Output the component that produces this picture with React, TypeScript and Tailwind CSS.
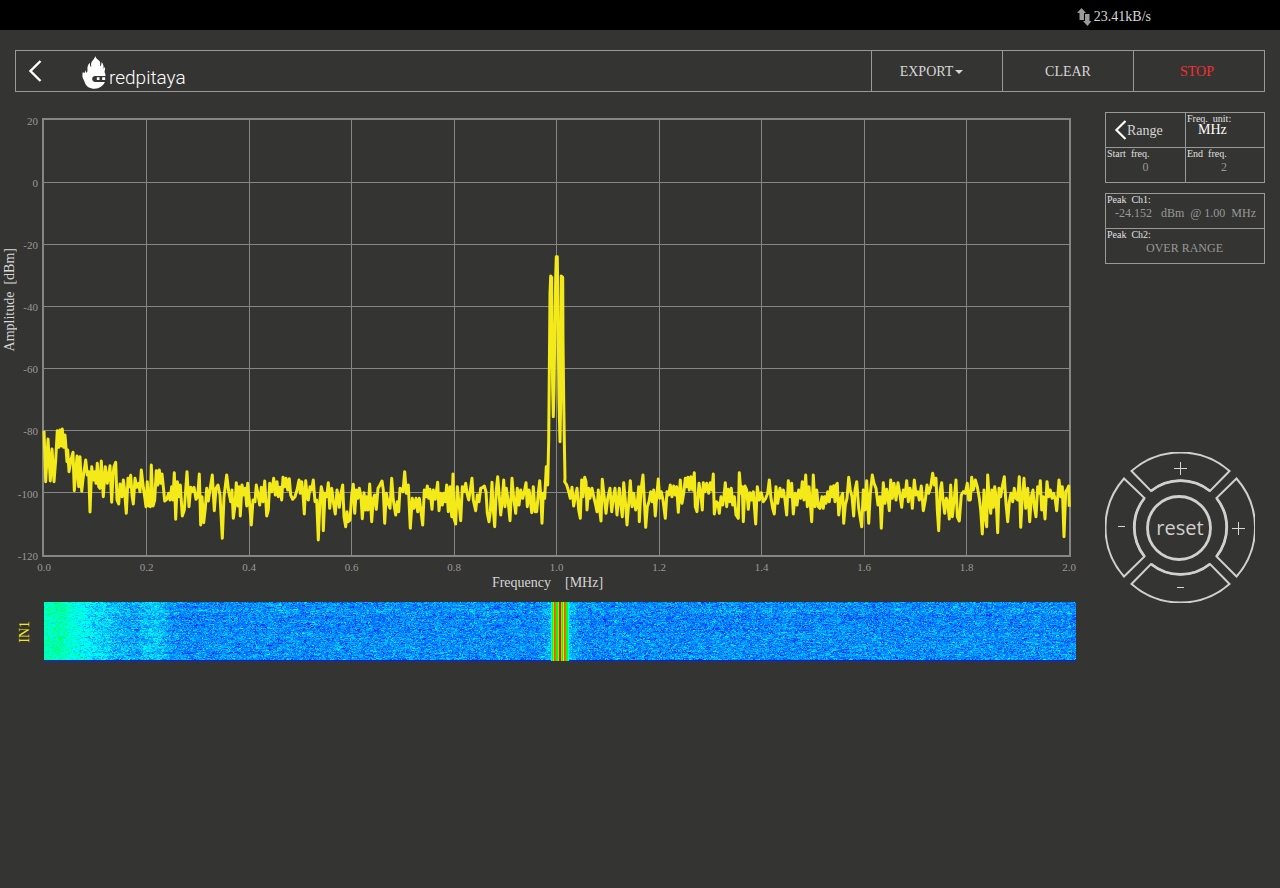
import { useEffect, useRef } from "react";
import type { ReactNode } from "react";

const PLOT_W = 1029;
const PLOT_H = 439;

type Segment = { x: number; y: number; points: string };

/* Sweep samples, in thirds of a plot unit, relative to each segment's origin. */
const SEGMENTS: Segment[] = [
  {
    x: -42,
    y: 282,
    points:
      "132,92 137,245 144,117 151,243 156,147 162,245 167,180 172,92 176,142 180,90 184,138 187,87 191,142 195,105 201,185 203,150 207,215 213,180 219,157 223,272 231,168 236,260 240,170 245,274 250,230 257,180 262,225 266,215 270,336 275,200 280,240 284,215 288,250 292,190 296,260 300,265 304,183 310,290 316,200 322,250 330,197 335,307 339,225 342,200 347,187 351,300 356,312 360,252 366,290 370,240 373,262 379,340 384,235 388,260 392,226 396,285 400,312 405,235 410,262 416,250 420,275 424,210 430,262 434,290 438,320 442,245 446,318 451,320 454,195 459,318 464,300 469,212 473,255 478,210 482,250 486,222 490,260 494,303 500,298 506,280 510,300 515,260 519,300 523,218 527,358 532,245 537,290 541,255 547,348 553,330 561,215 567,320 572,262 577,275 582,262 588,298 593,290 598,222 602,375 606,290 611,368 616,325 620,265 625,303 629,275 637,225 643,332 648,265 654,255 660,285 667,415 672,290 680,225 686,275 692,305 696,270 700,355 705,318 709,248 714,318 718,260 721,348 726,255 731,285 736,265 740,318 743,250 748,300 754,375 759,300 765,305 769,255 774,283 779,315 784,262 789,305 794,243 800,348 805,330 809,250 815,275 821,235 826,285 831,245 835,290 840,262 845,300 849,232 854,260 858,235 863,270 868,236 872,285 878,298 885,290 891,270 897,240",
  },
  {
    x: 248,
    y: 332,
    points:
      "27,92 31,130 35,95 39,130 43,192 47,92 52,145 55,150 60,110 65,120 70,90 75,155 80,150 85,270 90,150 94,110 98,130 100,242 105,130 110,140 115,98 119,175 125,115 130,155 136,192 141,120 145,140 148,172 153,130 158,105 162,200 167,230 171,185 175,215 180,210 185,135 190,103 194,190 199,120 204,145 208,115 213,140 217,206 222,128 226,180 230,140 234,180 239,102 245,215 250,145 254,135 259,178 264,115 270,105 276,93 280,120 284,220 289,130 295,160 300,175 305,85 310,150 317,195 322,155 326,185 330,115 335,118 339,125 344,65 349,130 355,105 361,235 367,145 372,175 378,145 383,185 388,145 393,185 398,225 403,120 408,140 412,108 416,145 420,118 426,178 430,120 436,148 443,97 447,182 452,130 457,165 461,130 466,155 470,105 475,185 480,110 485,200 489,72 492,205 497,222 502,110 507,160 512,212 517,110 522,125 527,100 531,130 536,150 541,120 546,85 550,150 557,182 562,135 567,155 572,115 578,112 583,108 588,125 592,190 597,215 601,185 606,97 610,180 614,230 619,120 623,80 628,140 632,195 637,150 641,90 645,170 649,115 654,150 660,212 666,85 671,145 677,190 682,115 687,165 692,120 698,145 703,125 708,98 712,170 717,120 721,150 725,188 730,110 735,185 740,185 745,130 749,92 753,150 756,220 760,130 764,145 769,50",
  },
  {
    x: 458,
    y: 122,
    points:
      "143,735 146,600 148,400 150,160 152,108 155,112 156,300 158,450 160,530 162,450 164,300 167,110 169,50 172,50 175,300 177,480 180,605 182,480 183,300 184,108 188,112 189,300 191,480 193,600 195,715",
  },
  {
    x: 518,
    y: 332,
    points:
      "14,95 20,105 26,125 31,145 36,112 41,168 46,140 51,115 56,180 61,205 65,90 69,140 74,82 78,95 81,180 86,115 90,145 96,115 101,140 106,160 111,185 115,120 119,180 123,213 127,88 132,135 138,190 143,145 150,115 155,185 160,145 165,115 171,195 178,115 182,160 187,200 191,98 196,150 201,225 206,160 211,92 216,170 221,130 227,180 232,160 236,110 238,215 243,120 249,75 253,150 257,232 262,170 267,155 272,125 277,155 281,120 286,198 290,140 295,87 299,145 304,125 309,150 316,205 321,125 326,135 331,105 336,140 341,108 346,135 350,110 355,187 361,90 366,160 371,130 376,85 380,110 384,82 388,120 393,80 398,120 403,68 406,170 411,185 417,100 422,130 427,180 430,98 435,125 440,100 446,130 451,98 456,120 460,72 463,192 469,155 474,160 478,190 483,140 488,165 492,140 496,98 500,170 505,118 509,155 514,115 518,165 523,140 528,195 535,205 538,68 543,130 547,110 550,215 555,108 560,120 565,178 570,128 575,150 580,125 587,222 592,110 598,150 604,128 610,155 617,145 623,130 628,90 633,145 638,175 643,192 648,110 653,160 660,115 665,140 670,120 675,150 680,195 685,92 690,140 695,100 700,192 706,130 711,165 716,120 722,145 727,95 732,150 737,75 742,170 747,110 750,150 755,215 760,75 765,170 770,120 775,170",
  },
  {
    x: 768,
    y: 332,
    points:
      "30,175 36,140 40,175 44,140 48,160 53,125 58,155 62,110 67,140 71,107 75,155 79,105 82,100 86,195 92,145 98,130 101,220 106,165 111,145 116,82 121,120 126,140 131,198 135,120 140,95 146,175 155,230 160,120 165,180 170,92 176,220 181,130 187,75 192,100 198,115 204,165 210,140 214,235 220,98 225,160 230,118 234,140 238,182 242,90 247,145 252,100 258,150 264,98 269,130 275,172 280,120 285,140 290,92 295,155 300,115 304,130 307,175 313,90 318,135 323,125 328,150 334,108 340,182 346,150 351,105 356,130 362,110 368,70 373,105 378,85 382,180 386,242 391,120 395,98 399,150 404,190 409,145 413,155 418,207 422,105 427,200 433,145 438,90 442,200 448,213 454,135 460,125 466,130 472,100 476,150 481,150 485,82 490,120 496,90 502,110 508,145 512,180 517,252 522,120 526,200 530,230 533,75 538,150 542,190 546,120 550,172 554,110 558,140 563,248 567,115 572,140 577,110 583,80 588,160 593,215 598,155 603,130 608,155 613,115 618,145 623,150 628,80 632,232 637,140 642,85 647,175 653,115 659,215 664,140 669,120 673,170 678,200 683,110 688,130 691,92 695,180 700,140 705,207 711,95 716,140 721,120 726,145 731,130 736,150 740,182 747,90 752,140 757,110 762,260 767,125 772,118 776,108 778,170",
  },
];

const TRACE = SEGMENTS.flatMap((s) =>
  s.points.split(" ").map((p) => {
    const [px, py] = p.split(",").map(Number);
    return `${(s.x + px / 3).toFixed(1)},${(s.y + py / 3).toFixed(1)}`;
  }),
).join(" ");

const X_TICKS = ["0.0", "0.2", "0.4", "0.6", "0.8", "1.0", "1.2", "1.4", "1.6", "1.8", "2.0"];
const Y_TICKS = ["20", "0", "-20", "-40", "-60", "-80", "-100", "-120"];

function Plot() {
  return (
    <svg
      viewBox={`0 0 ${PLOT_W} ${PLOT_H}`}
      preserveAspectRatio="none"
      className="block h-[439px] w-full"
      role="img"
      aria-label="Spectrum"
    >
      <g stroke="#868685" strokeWidth="1" shapeRendering="crispEdges">
        {[1, 2, 3, 4, 5, 6, 7, 8, 9].map((i) => (
          <line key={i} x1={Math.floor(2 + 102.5 * i) + 0.5} x2={Math.floor(2 + 102.5 * i) + 0.5} y1="2" y2="437" />
        ))}
        {[0, 1, 2, 3, 4, 5].map((i) => (
          <line key={i} x1="2" x2="1027" y1={64.5 + 62 * i} y2={64.5 + 62 * i} />
        ))}
      </g>
      <rect x="1" y="1" width="1027" height="437" fill="none" stroke="#868685" strokeWidth="2" />
      <polyline points={TRACE} fill="none" stroke="#f4ea1a" strokeWidth="3" strokeLinejoin="round" />
    </svg>
  );
}

const COLS = 1032;
const ROWS = 59;

/* Blue - cyan - green - yellow - red ramp. */
function ramp(v: number): [number, number, number] {
  const t = Math.max(0, Math.min(1, v)) * 4;
  if (t < 1) return [0, t * 255, 255];
  if (t < 2) return [0, 255, (2 - t) * 255];
  if (t < 3) return [(t - 2) * 255, 255, 0];
  return [255, (4 - t) * 255, 0];
}

/* Carrier and its two sidebands, one level per column from column 507 on. */
const PEAK_START = 507;
const PEAK = [0.3, 0.46, 0.62, 0.92, 0.9, 0.5, 0.47, 0.62, 0.99, 1, 0.6, 0.5, 0.68, 0.92, 0.9, 0.47, 0.47, 0.3];

function baseLevel(x: number) {
  const edge = 0.2 / (1 + Math.exp((x - 46) / 20));
  const bump = 0.05 * Math.exp(-(((x - 110) / 14) ** 2));
  const green = 0.03 * Math.exp(-(((x - 16) / 9) ** 2));
  const skirt = 0.09 * Math.exp(-(((x - 516) / 12) ** 2));
  return 0.135 + edge + bump + green + skirt;
}

function Waterfall() {
  const ref = useRef<HTMLCanvasElement>(null);
  useEffect(() => {
    const ctx = ref.current?.getContext("2d");
    if (!ctx) return;
    const img = ctx.createImageData(COLS, ROWS);
    let seed = 20417;
    const rand = () => {
      seed = (seed * 1664525 + 1013904223) >>> 0;
      return seed / 4294967296;
    };
    for (let r = 0; r < ROWS; r++) {
      const rowShift = (rand() - 0.5) * 0.025;
      let noise = 0;
      for (let c = 0; c < COLS; c++) {
        if (rand() < 0.75) noise = (rand() + rand() + rand() - 1.5) * 0.085 + rowShift;
        const peak = PEAK[c - PEAK_START];
        const level = peak ?? (r === ROWS - 1 ? 0.03 : baseLevel(c) + noise);
        const [red, green, blue] = ramp(level);
        const k = (r * COLS + c) * 4;
        img.data[k] = red;
        img.data[k + 1] = green;
        img.data[k + 2] = blue;
        img.data[k + 3] = 255;
      }
    }
    ctx.putImageData(img, 0, 0);
  }, []);
  return (
    <canvas
      ref={ref}
      width={COLS}
      height={ROWS}
      className="block h-[59px] w-full [image-rendering:pixelated]"
      aria-label="IN1 waterfall"
    />
  );
}

function Chevron({ className }: { className: string }) {
  return (
    <svg viewBox="0 0 13 22" className={className} fill="none" stroke="#fff" strokeWidth="2.4" aria-hidden="true">
      <path d="M12 1 2 11l10 10" />
    </svg>
  );
}

function Logo() {
  return (
    <a href="#home" className="flex items-center gap-[3px] text-white">
      <svg viewBox="0 0 71 99" className="h-[33px] w-[24px]" aria-hidden="true">
        <path
          fill="#fff"
          d="M39 0c-1 9-10 13-12 22-1 5 1 8 0 11-3-2-4-6-4-13-6 6-8 13-7 21 0 5-1 8-3 9-2-3-3-5-3-9L7 52l-5-4c-2 8-2 14 1 20 3 5 4 8 5 12 4 11 15 18 29 18 15 0 26-8 31-20H39c-5 0-9-4-9-9s4-9 9-9h31c0-5-1-9-3-12 1-5 3-9 1-15l-4 5c1-7 0-14-6-20 0 6-1 11-4 13-1-5 2-10-2-16-4-4-11-7-13-15z"
        />
        <path fill="#fff" d="M44 64h8v8h-8zM60 64h9v8h-9z" />
      </svg>
      <span className="mt-[10px] font-['Roboto',sans-serif] text-[19px] leading-6 font-light">redpitaya</span>
    </a>
  );
}

function Field({ label, htmlFor, children }: { label: string; htmlFor?: string; children: ReactNode }) {
  return (
    <div className="flex min-w-0 flex-col">
      <label htmlFor={htmlFor} className="h-3 pl-px text-[10px] leading-3 whitespace-pre text-[#e0e0e0]">
        {label}
      </label>
      {children}
    </div>
  );
}

function RangePanel() {
  return (
    <div className="grid h-[71px] grid-cols-[80px_1fr] grid-rows-2 border border-[#999]">
      <button className="flex items-center border-r border-b border-[#999] pt-px pl-2 text-[14px] text-[#d6d6d6]">
        <Chevron className="h-5 w-[13px]" />
        <span className="pt-px">Range</span>
      </button>
      <div className="border-b border-[#999]">
        <Field label="Freq.  unit:" htmlFor="unit">
          <select
            id="unit"
            defaultValue="MHz"
            className="-mt-[3px] h-4 appearance-none bg-transparent pl-3 text-[14px] leading-4 text-white outline-none"
          >
            <option>Hz</option>
            <option>kHz</option>
            <option>MHz</option>
          </select>
        </Field>
      </div>
      <div className="border-r border-[#999]">
        <Field label="Start  freq." htmlFor="start">
          <input id="start" defaultValue="0" className="-mt-px h-4 w-full bg-transparent text-center text-[12px] leading-4 text-[#999] outline-none" />
        </Field>
      </div>
      <Field label="End  freq." htmlFor="end">
        <input id="end" defaultValue="2" className="-mt-px h-4 w-full bg-transparent pr-[2px] text-center text-[12px] leading-4 text-[#999] outline-none" />
      </Field>
    </div>
  );
}

function PeakPanel() {
  return (
    <div className="mt-[10px] grid h-[71px] grid-rows-2 border border-[#999]">
      <div className="border-b border-[#999]">
        <Field label="Peak  Ch1:" htmlFor="peak1">
          <output id="peak1" className="-mt-px h-4 pl-px text-center text-[12px] leading-4 whitespace-pre text-[#999]">
            {"-24.152   dBm  @ 1.00  MHz"}
          </output>
        </Field>
      </div>
      <Field label="Peak  Ch2:" htmlFor="peak2">
        <output id="peak2" className="-mt-px h-4 pr-px text-center text-[12px] leading-4 text-[#999]">
          OVER RANGE
        </output>
      </Field>
    </div>
  );
}

function Sign({ plus }: { plus?: boolean }) {
  return (
    <svg viewBox="0 0 15 15" className="h-[15px] w-[15px]" stroke="#d6d6d6" strokeWidth="1" shapeRendering="crispEdges" aria-hidden="true">
      {plus ? <path d="M1 7.5h13M7.5 1v13" /> : <path d="M4 7.5h7" />}
    </svg>
  );
}

function Knob() {
  return (
    <div className="relative mt-[188px] h-[151px] w-[150px]">
      <svg viewBox="0 0 150 151" className="absolute inset-0 h-full w-full" fill="none" stroke="#d0d0cf" strokeWidth="2" aria-hidden="true">
        <path d="M26.5 19A74 74 0 0 1 124.5 19L105 39A47 47 0 0 0 46 39Z" />
        <path d="M131.5 26.5A74 74 0 0 1 131.5 124.5L111.5 104.5A47 47 0 0 0 111.5 46Z" />
        <path d="M124.5 132A74 74 0 0 1 26.5 132L46 112A47 47 0 0 0 105 112Z" />
        <path d="M19 124.5A74 74 0 0 1 19 26.5L39.5 46A47 47 0 0 0 39.5 104.5Z" />
        <g strokeWidth="2.8">
          <path d="M46 39A47 47 0 0 1 105 39M111.5 46A47 47 0 0 1 111.5 104.5M105 112A47 47 0 0 1 46 112M39.5 104.5A47 47 0 0 1 39.5 46" />
          <circle cx="74" cy="76" r="31.5" />
        </g>
      </svg>
      <div className="relative grid h-full grid-cols-[33px_1fr_33px] grid-rows-[33px_1fr_31px]">
        <button aria-label="Zoom amplitude in" className="col-start-2 flex items-center justify-center">
          <Sign plus />
        </button>
        <button aria-label="Zoom frequency out" className="col-start-1 row-start-2 flex items-center justify-center pb-1">
          <Sign />
        </button>
        <button className="col-start-2 row-start-2 flex items-center justify-center pb-[2px] font-['Open_Sans'] text-[20px] leading-5 text-[#d0d0cf]">
          reset
        </button>
        <button aria-label="Zoom frequency in" className="col-start-3 row-start-2 flex items-center justify-center">
          <Sign plus />
        </button>
        <button aria-label="Zoom amplitude out" className="col-start-2 row-start-3 flex items-center justify-center">
          <Sign />
        </button>
      </div>
    </div>
  );
}

export default function App() {
  return (
    <div className="min-h-screen bg-[#343432] font-['Liberation_Serif',serif] text-[#d6d6d6]">
      <div className="flex h-[30px] items-center justify-end gap-[2px] bg-black pt-1 pr-[129px] text-[14px] leading-4">
        <svg viewBox="0 0 15 18" className="h-[18px] w-[15px]" fill="#999" aria-hidden="true">
          <path d="M4.500 0l4.500 5H7v7H2.500V5H0zM10.500 18l-4.500-5h2V6h4.500v7h2z" />
        </svg>
        <span>23.41kB/s</span>
      </div>

      <header className="mx-[15px] mt-5 flex h-[42px] items-stretch border border-[#999] text-[14px]">
        <button aria-label="Back" className="flex w-[66px] items-center pl-3">
          <Chevron className="h-[22px] w-[14px]" />
        </button>
        <div className="flex flex-1 items-center pt-[3px]">
          <Logo />
        </div>
        <button className="flex w-[131px] items-center justify-center gap-[2px] border-l border-[#999] pr-[11px]">
          EXPORT
          <svg viewBox="0 0 8 4" className="mt-px h-1 w-2" fill="#d6d6d6" aria-hidden="true">
            <path d="M0 0h8L4 4z" />
          </svg>
        </button>
        <button className="w-[131px] border-l border-[#999]">CLEAR</button>
        <button className="w-[131px] border-l border-[#999] pr-1 text-[#f22f33]">STOP</button>
      </header>

      <main className="mt-5 flex items-start pr-[15px]">
        <section className="grid min-w-0 flex-1 grid-cols-[20px_18px_minmax(0,1fr)] pt-[6px]">
          <div className="flex items-center justify-center pb-[110px]">
            <span className="rotate-180 text-[14px] leading-4 whitespace-pre [writing-mode:vertical-rl]">
              {"Amplitude  [dBm]"}
            </span>
          </div>
          <div className="flex h-[439px] flex-col items-end justify-between pt-[3px] pb-[1px] text-[11px] text-[#999]">
            {Y_TICKS.map((t) => (
              <span key={t} className="flex h-0 items-center">
                {t}
              </span>
            ))}
          </div>
          <div className="pr-[5px] pl-1">
            <Plot />
            <div className="flex h-[18px] justify-between px-[2px] pt-[2px] text-[11px] leading-4 text-[#999]">
              {X_TICKS.map((t) => (
                <span key={t} className="flex w-0 justify-center">
                  {t}
                </span>
              ))}
            </div>
            <p className="pr-[18px] text-center text-[14px] leading-4 whitespace-pre">{"Frequency    [MHz]"}</p>
          </div>
          <div className="col-span-2 mt-[11px] flex items-center justify-end pr-[5px]">
            <span className="rotate-180 text-[14px] leading-4 text-[#f4ea1a] [writing-mode:vertical-rl]">IN1</span>
          </div>
          <div className="mt-[11px] pl-[6px]">
            <Waterfall />
          </div>
        </section>

        <aside className="ml-[29px] w-[160px] shrink-0">
          <RangePanel />
          <PeakPanel />
          <Knob />
        </aside>
      </main>
    </div>
  );
}
